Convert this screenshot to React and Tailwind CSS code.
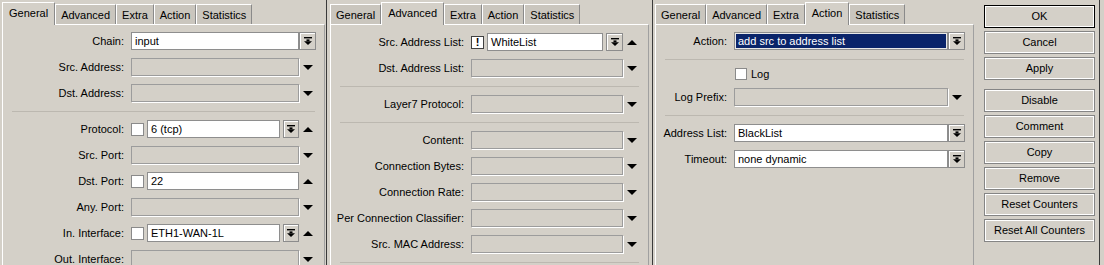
import React from "react";

const TABS = ["General", "Advanced", "Extra", "Action", "Statistics"];

function Tabs({ active }) {
  return (
    <div className="flex items-end h-[24px] shrink-0">
      {TABS.map((t) =>
        t === active ? (
          <div
            key={t}
            className="relative z-10 -mb-px h-[23px] px-[6px] pt-[4px] leading-[13px] bg-[#d4d0c8] border-l border-t border-white border-r border-r-[#8a8a8a]"
          >
            {t}
          </div>
        ) : (
          <div
            key={t}
            className="h-[20px] px-[5px] pt-[4px] leading-[13px] bg-[#cac6be] border-l border-t border-white border-r border-r-[#8a8a8a]"
          >
            {t}
          </div>
        )
      )}
    </div>
  );
}

function DropIcon() {
  return (
    <svg width="8" height="8" viewBox="0 0 8 8" fill="#000">
      <rect x="0" y="0" width="8" height="1.4" />
      <rect x="2.5" y="2.4" width="3" height="1.8" />
      <path d="M0 4.2h8L4 8z" />
    </svg>
  );
}

function Drop({ w = "w-[17px]" }) {
  return (
    <div className={`${w} h-[18px] shrink-0 flex items-center justify-center border border-[#8c8c8c] shadow-[inset_1px_1px_0_#fff] bg-[#d4d0c8]`}>
      <DropIcon />
    </div>
  );
}

function Tri({ up }) {
  return (
    <div className="w-[17px] h-[18px] flex items-center justify-center">
      <svg width="10" height="5" viewBox="0 0 10 5" fill="#000">
        {up ? <path d="M0 5h10L5 0z" /> : <path d="M0 0h10L5 5z" />}
      </svg>
    </div>
  );
}

function Field({ value, disabled, navy }) {
  if (disabled)
    return <div className="flex-1 h-[18px] border border-[#9c9c9c] shadow-[1px_1px_0_#fff] bg-[#d4d0c8]" />;
  if (navy)
    return (
      <div className="flex-1 h-[18px] border border-[#8e8e8e] bg-[#0a246a] text-white shadow-[inset_0_0_0_1px_#e8e8e8] pl-[3px] leading-[16px] whitespace-nowrap overflow-hidden">
        {value}
      </div>
    );
  return (
    <div className="flex-1 h-[18px] border border-[#8e8e8e] bg-white pl-[3px] leading-[16px] whitespace-nowrap overflow-hidden">
      {value}
    </div>
  );
}

function Check({ bang }) {
  return (
    <div
      className={`w-[13px] h-[13px] shrink-0 bg-white flex items-center justify-center font-bold leading-[11px] ${
        bang ? "border border-[#404040]" : "border border-[#8a8a8a]"
      }`}
    >
      {bang ? "!" : ""}
    </div>
  );
}

function Row({ lw, mw, label, main, side }) {
  return (
    <div className="flex items-center h-[18px]">
      <div className={`${lw} shrink-0 text-right pr-[7px] whitespace-nowrap`}>{label}</div>
      <div className={`${mw} shrink-0 flex items-center gap-[3px]`}>{main}</div>
      <div className="w-[17px] shrink-0 flex items-center">{side}</div>
    </div>
  );
}

function Sep() {
  return <div className="h-[2px] mx-[9px] border-b border-[#bcb8b0]" />;
}

function Box({ active, pt, children }) {
  return (
    <div className="flex flex-col h-full">
      <Tabs active={active} />
      <div className={`flex-1 flex flex-col gap-[8px] ${pt} border-l border-t border-white border-r border-r-[#a0a0a0]`}>
        {children}
      </div>
    </div>
  );
}

function GeneralPanel() {
  const p = { lw: "w-[128px]", mw: "w-[168px]" };
  return (
    <Box active="General" pt="pt-[7px]">
      <Row {...p} label="Chain:" main={<Field value="input" />} side={<Drop />} />
      <Row {...p} label="Src. Address:" main={<Field disabled />} side={<Tri />} />
      <Row {...p} label="Dst. Address:" main={<Field disabled />} side={<Tri />} />
      <Sep />
      <Row {...p} label="Protocol:" main={<><Check /><Field value="6 (tcp)" /><Drop w="w-[16px]" /></>} side={<Tri up />} />
      <Row {...p} label="Src. Port:" main={<Field disabled />} side={<Tri />} />
      <Row {...p} label="Dst. Port:" main={<><Check /><Field value="22" /></>} side={<Tri up />} />
      <Row {...p} label="Any. Port:" main={<Field disabled />} side={<Tri />} />
      <Row {...p} label="In. Interface:" main={<><Check /><Field value="ETH1-WAN-1L" /><Drop w="w-[16px]" /></>} side={<Tri up />} />
      <Row {...p} label="Out. Interface:" main={<Field disabled />} side={<Tri />} />
    </Box>
  );
}

function AdvancedPanel() {
  const p = { lw: "w-[140px]", mw: "w-[152px]" };
  return (
    <Box active="Advanced" pt="pt-[8px]">
      <Row {...p} label="Src. Address List:" main={<><Check bang /><Field value="WhiteList" /><Drop w="w-[17px]" /></>} side={<Tri up />} />
      <Row {...p} label="Dst. Address List:" main={<Field disabled />} side={<Tri />} />
      <Sep />
      <Row {...p} label="Layer7 Protocol:" main={<Field disabled />} side={<Tri />} />
      <Sep />
      <Row {...p} label="Content:" main={<Field disabled />} side={<Tri />} />
      <Row {...p} label="Connection Bytes:" main={<Field disabled />} side={<Tri />} />
      <Row {...p} label="Connection Rate:" main={<Field disabled />} side={<Tri />} />
      <Row {...p} label="Per Connection Classifier:" main={<Field disabled />} side={<Tri />} />
      <Row {...p} label="Src. MAC Address:" main={<Field disabled />} side={<Tri />} />
      <Sep />
    </Box>
  );
}

function ActionPanel() {
  const p = { lw: "w-[78px]", mw: "w-[214px]" };
  return (
    <Box active="Action" pt="pt-[7px]">
      <Row {...p} label="Action:" main={<Field navy value="add src to address list" />} side={<Drop />} />
      <Sep />
      <div className="flex items-center h-[12px]">
        <div className="w-[79px] shrink-0" />
        <div className="w-[12px] h-[12px] bg-white border border-[#8a8a8a]" />
        <span className="ml-[4px]">Log</span>
      </div>
      <Row {...p} label="Log Prefix:" main={<Field disabled />} side={<Tri />} />
      <Sep />
      <Row {...p} label="Address List:" main={<Field value="BlackList" />} side={<Drop />} />
      <Row {...p} label="Timeout:" main={<Field value="none dynamic" />} side={<Drop />} />
    </Box>
  );
}

function Btn({ children, def }) {
  return (
    <div
      className={`h-[23px] flex items-center justify-center bg-[#d4d0c8] ${
        def ? "border border-black shadow-[inset_0_0_0_1px_#fff]" : "border border-[#858585] shadow-[inset_0_0_0_1px_#fff]"
      }`}
    >
      {children}
    </div>
  );
}

export default function App() {
  return (
    <div className="flex w-[1104px] h-[265px] overflow-hidden bg-[#d4d0c8] text-[11px] text-black font-['Liberation_Sans',Arial,sans-serif]">
      <div className="w-[326px] shrink-0 pl-[2px] pr-[1px]">
        <GeneralPanel />
      </div>
      <div className="w-px shrink-0 bg-[#3a3a3a]" />
      <div className="w-[325px] shrink-0 px-[3px]">
        <AdvancedPanel />
      </div>
      <div className="w-px shrink-0 bg-[#3a3a3a]" />
      <div className="w-[446px] shrink-0 flex">
        <div className="w-[319px] shrink-0 ml-[2px]">
          <ActionPanel />
        </div>
        <div className="w-[111px] shrink-0 ml-[10px] pt-[5px] flex flex-col gap-[3px]">
          <Btn def>OK</Btn>
          <Btn>Cancel</Btn>
          <Btn>Apply</Btn>
          <div className="mt-[6px] flex flex-col gap-[3px]">
            <Btn>Disable</Btn>
            <Btn>Comment</Btn>
            <Btn>Copy</Btn>
            <Btn>Remove</Btn>
            <Btn>Reset Counters</Btn>
            <Btn>Reset All Counters</Btn>
          </div>
        </div>
      </div>
      <div className="w-px shrink-0 bg-[#3a3a3a]" />
    </div>
  );
}
